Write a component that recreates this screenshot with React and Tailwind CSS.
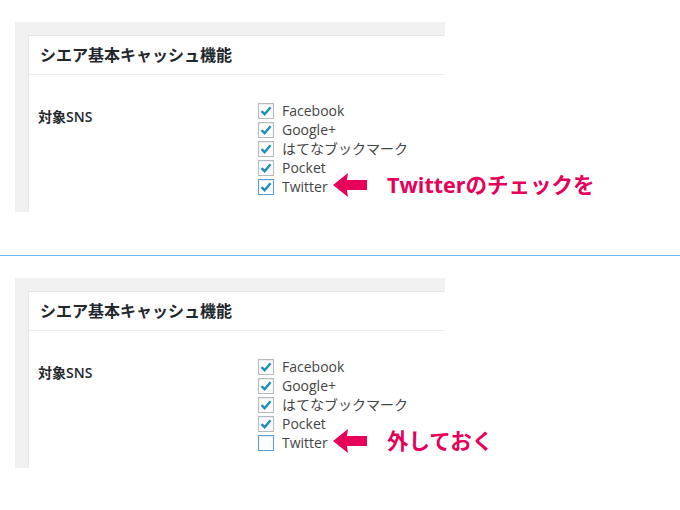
import React from "react";

const SNS = ["Facebook", "Google+", "はてなブックマーク", "Pocket", "Twitter"];

function Check({ checked, focus }) {
  return (
    <span
      className={`flex h-4 w-4 items-center justify-center border bg-white shadow-[inset_0_1px_2px_rgba(0,0,0,0.1)] ${
        focus ? "border-[#5b9dd9]" : "border-[#b4b9be]"
      }`}
    >
      {checked && (
        <svg width="12" height="12" viewBox="0 0 12 12">
          <path d="M1.5 6.2 L4.6 9.2 L10.6 2.2" fill="none" stroke="#1e8cbe" strokeWidth="2.4" />
        </svg>
      )}
    </span>
  );
}

function Panel({ twitterOn, note }) {
  return (
    <div className="relative">
      <div className="ml-[15px] h-[190px] w-[430px] overflow-hidden bg-[#f1f1f1] pl-[13px] pt-[13px]">
        <div className="h-full border-l border-t border-[#e5e5e5] bg-white">
          <div className="flex h-[39px] items-center border-b border-[#eeeeee] pl-[11px] text-[16px] font-bold text-[#23282d]">
            シエア基本キャッシュ機能
          </div>
          <div className="flex pt-[26px]">
            <div className="w-[229px] pl-[9px] pt-[6px] text-[14px] font-semibold leading-5 text-[#23282d]">
              対象SNS
            </div>
            <div className="flex flex-col">
              {SNS.map((s) => {
                const tw = s === "Twitter";
                return (
                  <label key={s} className="flex h-[19px] items-center gap-2 text-[14px] text-[#444]">
                    <Check checked={tw ? twitterOn : true} focus={tw} />
                    <span className="leading-none">{s}</span>
                  </label>
                );
              })}
            </div>
          </div>
        </div>
      </div>
      <div className="absolute left-[333px] top-[151px] flex items-center">
        <svg width="34" height="24" viewBox="0 0 34 24">
          <polygon points="0,12 15,0 14,7 34,7 34,17 14,17 15,24" fill="#e6005a" />
        </svg>
        <span className="ml-[20px] text-[21.5px] font-bold leading-none text-[#e6005a]">{note}</span>
      </div>
    </div>
  );
}

export default function App() {
  return (
    <div
      className="h-[510px] w-[680px] overflow-hidden bg-white pt-[22px]"
      style={{ fontFamily: '"Open Sans", "Noto Sans CJK JP", sans-serif' }}
    >
      <Panel twitterOn={true} note="Twitterのチェックを" />
      <div className="mt-[43px] h-px w-full bg-[#6fb8e6]" />
      <div className="mt-[22px]">
        <Panel twitterOn={false} note="外しておく" />
      </div>
    </div>
  );
}
